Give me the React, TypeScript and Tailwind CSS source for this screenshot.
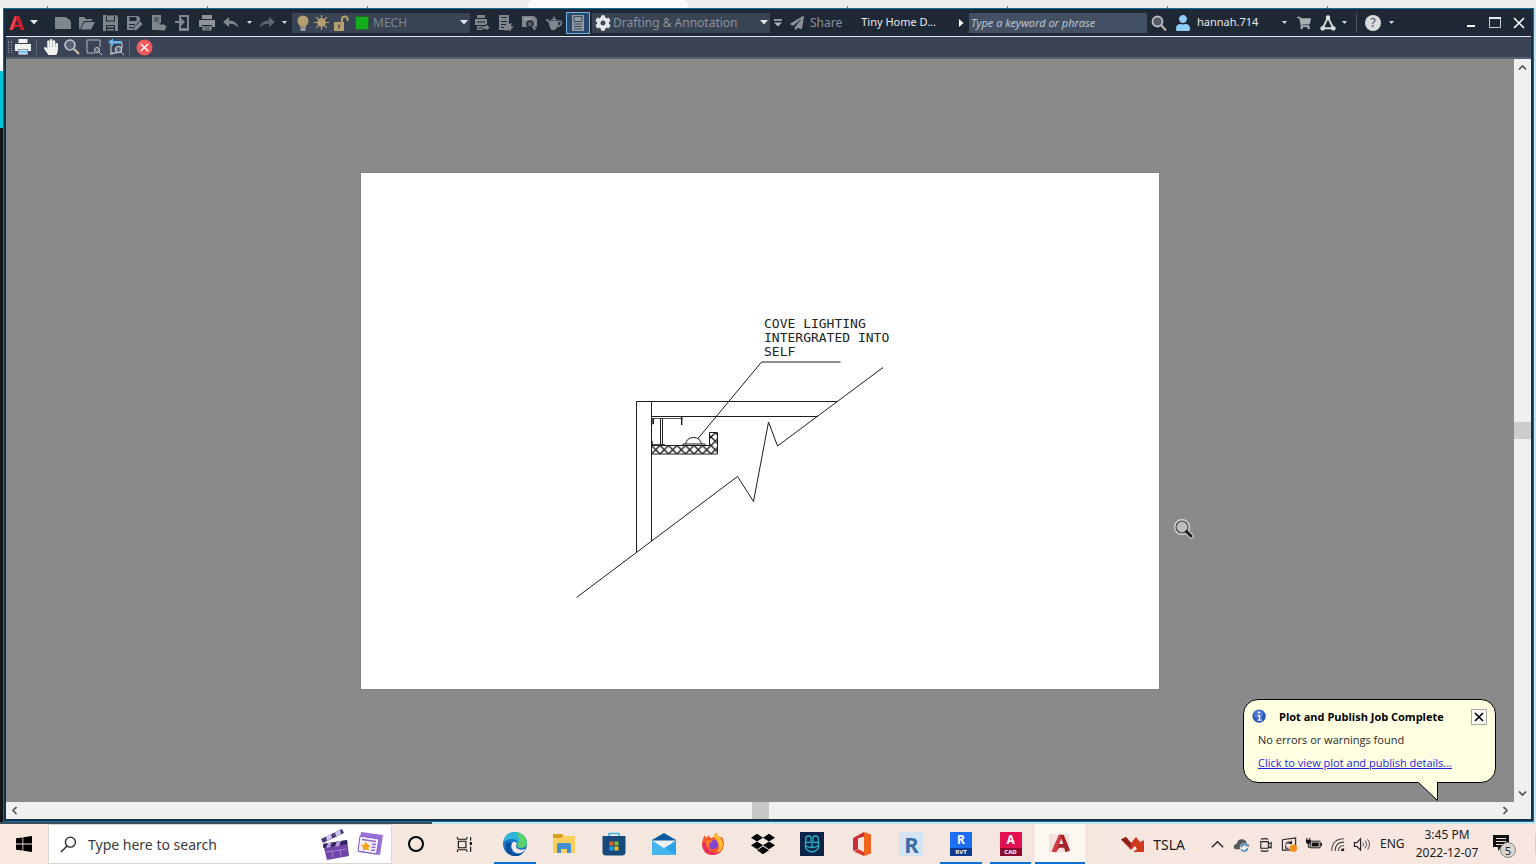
import type { ReactNode } from "react";
import { FaDropbox, FaShoppingCart, FaPaperPlane, FaHandPaper, FaCog, FaUser } from "react-icons/fa";

type IconProps = { children: ReactNode; size?: number; box?: string };

function Icon({ children, size = 18, box = "0 0 18 18" }: IconProps) {
  return (
    <svg width={size} height={size} viewBox={box} fill="none" aria-hidden="true" className="shrink-0">
      {children}
    </svg>
  );
}

function Caret({ className = "text-gray-200" }: { className?: string }) {
  return (
    <svg width="8" height="5" viewBox="0 0 8 5" aria-hidden="true" className={`shrink-0 ${className}`}>
      <path d="M0 0h8L4 4.5z" fill="currentColor" />
    </svg>
  );
}

function CaretButton({ label, className = "w-3" }: { label: string; className?: string }) {
  return (
    <button aria-label={label} className={`flex h-6 shrink-0 items-center justify-center ${className}`}>
      <svg width="5" height="3" viewBox="0 0 5 3" aria-hidden="true">
        <path d="M0 0h5L2.500 3z" fill="#d5d9df" />
      </svg>
    </button>
  );
}

function ToolButton({ label, children, className = "w-6" }: { label: string; children: ReactNode; className?: string }) {
  return (
    <button aria-label={label} title={label} className={`flex h-6 shrink-0 items-center justify-center ${className}`}>
      {children}
    </button>
  );
}

const G = "#7f868d";
const D = "#1f2835";

const fileTools = [
  { label: "New", art: <path d="M1 3h10l6 5v7H1zM12 3l5 4h-5z" fill={G} /> },
  { label: "Open", art: <path d="M1 15V3h5l2 2h6v2H6l-4 8zM6.500 8H17l-4 7.500H2.500z" fill={G} /> },
  {
    label: "Save",
    art: (
      <>
        <path d="M1 1h13l2 2v14H1z" fill={G} />
        <path d="M4 1.500h9v6H4zM4 11h9v6H4z" fill={D} />
        <path d="M5 2h7v4.500H5zM5 12h7v1.500H5zM5 15h7v1.500H5z" fill={G} />
      </>
    ),
  },
  {
    label: "Save As",
    art: (
      <>
        <path d="M1 2h11l2 2v4l-6 8H1z" fill={G} />
        <path d="M3.500 3h7v4h-7zM3 10h6v1H3zM3 13h4v1H3z" fill={D} />
        <path d="M8 13l6-6 3 3-6 6-4 1z" fill={G} stroke={D} strokeWidth="0.800" />
      </>
    ),
  },
  {
    label: "Open from Web & Mobile",
    art: (
      <>
        <path d="M2 1h9v8H8v7H2z" fill={G} />
        <path d="M4 3h5v5H4z" fill="#555d66" />
        <path d="M6 16V9h3l1 1.500h5V12h2l-2.500 4.500z" fill={G} />
      </>
    ),
  },
  {
    label: "Save to Web & Mobile",
    art: (
      <>
        <path d="M5 1h10v16H5zM7 3v11h6V3z" fill={G} fillRule="evenodd" />
        <path d="M1 7h6V4l4 4-4 4V9H1z" fill={G} />
      </>
    ),
  },
  {
    label: "Plot",
    art: (
      <>
        <path d="M4 1h10v4H4zM1 6h16v7h-3v-2H4v2H1z" fill="#8d9399" />
        <path d="M4.500 12h9v4.500h-9z" fill="#8d9399" />
        <path d="M6 13h6M6 15h6" stroke={D} strokeWidth="0.700" />
      </>
    ),
  },
];

const plotTools = [
  {
    label: "Batch Plot",
    art: (
      <>
        <path d="M4 1h8v3H4zM2 5h12v6H2zM4 12h6v4H4z" fill={G} />
        <path d="M4 8h8M5 14h4" stroke={D} />
        <path d="M9 12h4v-2l4 3.500-4 3.500v-2H9z" fill={G} stroke={D} strokeWidth="0.500" />
      </>
    ),
  },
  {
    label: "Page Setup",
    art: (
      <>
        <path d="M2 1h10v8l-3 7H2z" fill={G} />
        <path d="M4.500 3.500h5M4 7.500h6M4 10.500h5M4 13.500h3" stroke={D} />
        <path d="M9 9l3 1 3-1-1 3 3 1-3 2v2l-3-1-3 1 1-3-2-1 2-1z" fill={G} />
      </>
    ),
  },
  {
    label: "Plot Preview",
    art: (
      <>
        <path d="M1 2h12l3 3v8H1z" fill={G} />
        <path d="M3 4h7v2H3z" fill="#9aa0a6" />
        <circle cx="9" cy="10" r="3" fill="#555e68" stroke={D} strokeWidth="1.500" />
        <path d="M11.500 12.500l3 3" stroke={G} strokeWidth="2" />
      </>
    ),
  },
  {
    label: "Render",
    art: (
      <>
        <path d="M3.500 8Q1 7 .5 5.500L3 5q1 2 2 2h8q.5 2 0 5l-3 4H6.500Q4 13 3.500 8zM5 6.500q4-4 8 0z" fill={G} />
        <path d="M8.300 2.500h1.500V5H8.300z" fill={G} />
        <path d="M13 7.500q4-1 3.500 1.500t-4 4" stroke={G} strokeWidth="1.400" />
      </>
    ),
  },
];

function LayerControl() {
  return (
    <div className="ml-0.5 flex h-5 w-[178px] shrink-0 items-center bg-[#384354] pl-px">
      <span className="flex w-[19px] justify-center">
        <Icon>
          <circle cx="9" cy="7" r="5.500" fill="#b59f70" />
          <path d="M6 12h6v2H6z" fill="#9c927b" />
          <path d="M6.500 14.500h5v2h-5z" fill="#b9bec4" />
        </Icon>
      </span>
      <span className="flex w-[19px] justify-center">
        <Icon size={17}>
          <circle cx="9" cy="9" r="4.500" fill="#b59f70" />
          <path d="M9 1v16M1 9h16M3.500 3.500l11 11M14.500 3.500l-11 11" stroke="#b59f70" strokeWidth="1.300" />
        </Icon>
      </span>
      <span className="flex w-[19px] justify-center">
        <Icon>
          <path d="M2 8h10v9H2z" fill="#b59f70" />
          <path d="M10 8V5q0-2.500 2.800-2.500T15.500 5v2" stroke="#b59f70" strokeWidth="2" />
          <path d="M7 10.500v4" stroke="#4c4c48" strokeWidth="1.500" />
        </Icon>
      </span>
      <span className="ml-[5px] size-3.5 shrink-0 border border-[#27622f] bg-[#12ac1c]" />
      <div className="relative flex h-full min-w-0 flex-1 items-center">
        <select aria-label="Layer" className="h-full w-full appearance-none bg-transparent pl-1 text-[12px] text-[#7e868f]">
          <option>MECH</option>
        </select>
        <span className="pointer-events-none absolute right-0.5">
          <Caret />
        </span>
      </div>
    </div>
  );
}

function TitleBar() {
  return (
    <header className="flex h-7 shrink-0 items-center border-b border-[#dfe3e8] bg-[#1f2835] text-[11px]">
      <ToolButton label="Application menu" className="w-[22px]">
        <Icon size={16}>
          <path d="M0.500 17L6.500 1h5l6 16h-4.500l-1-3.500H7l-3 3.500z" fill="#c9202d" />
          <path d="M7.300 11L9 5l2 6z" fill={D} />
          <path d="M.5 17l6-16 2 1.500L4 17z" fill="#ee4550" />
        </Icon>
      </ToolButton>
      <button aria-label="Menu" className="flex h-6 w-3 shrink-0 items-center justify-center">
        <Caret />
      </button>
      <div className="ml-[11px] flex shrink-0">
        {fileTools.map((t) => (
          <ToolButton key={t.label} label={t.label}>
            <Icon>{t.art}</Icon>
          </ToolButton>
        ))}
      </div>
      <ToolButton label="Undo">
        <Icon>
          <path d="M1 8l6-5v3.500q8 0 9.500 7.500Q13 9.500 7 9.800V13z" fill={G} />
        </Icon>
      </ToolButton>
      <CaretButton label="Undo list" />
      <ToolButton label="Redo">
        <Icon>
          <path d="M17 8l-6-5v3.500Q3 6.500 1.500 14 5 9.500 11 9.800V13z" fill="#5e6670" />
        </Icon>
      </ToolButton>
      <CaretButton label="Redo list" className="w-[11px]" />
      <LayerControl />
      {plotTools.map((t) => (
        <ToolButton key={t.label} label={t.label}>
          <Icon>{t.art}</Icon>
        </ToolButton>
      ))}
      <button aria-label="Sheet Set Manager" className="flex h-[22px] w-6 shrink-0 items-center justify-center border border-[#76b4e6] bg-[#29486b]">
        <Icon>
          <path d="M3 1h12v16H3z" fill="#929aa2" />
          <path d="M5 2.500h8v5H5zM5 10h8M5 12.500h8M5 15h8" stroke="#3a4c62" />
        </Icon>
      </button>
      <div className="relative ml-0.5 flex h-5 w-[178px] shrink-0 items-center bg-[#384354] pl-[3px] text-[#8b929b]">
        <FaCog className="size-4 shrink-0 text-[#e3e6ea]" />
        <select aria-label="Workspace" className="h-full w-full appearance-none bg-transparent pl-0.5 text-[12px]">
          <option>Drafting &amp; Annotation</option>
        </select>
        <span className="pointer-events-none absolute right-0.5">
          <Caret />
        </span>
      </div>
      <ToolButton label="Customize Quick Access Toolbar" className="w-4">
        <Icon size={10} box="0 0 10 10">
          <path d="M1 2h8" stroke="#b5bac1" strokeWidth="1.500" />
          <path d="M1 4.500h8l-4 4z" fill="#b5bac1" />
        </Icon>
      </ToolButton>
      <button className="ml-1 flex h-6 shrink-0 items-center gap-1.5 text-[12px] text-[#8b929b]">
        <FaPaperPlane className="size-3.5" />
        Share
      </button>
      <div className="min-w-0 flex-1 truncate text-center text-[#e6e9ed]">Tiny Home D...</div>
      <ToolButton label="Expand search" className="w-3">
        <Icon size={8} box="0 0 8 8">
          <path d="M2 0l4.500 4L2 8z" fill="#fff" />
        </Icon>
      </ToolButton>
      <input
        aria-label="Search help"
        placeholder="Type a keyword or phrase"
        className="ml-0.5 h-5 w-[178px] shrink-0 bg-[#435064] px-0.5 text-[11px] text-white italic placeholder:text-[#bcc3cc]"
      />
      <ToolButton label="Search">
        <Icon>
          <circle cx="7.500" cy="7.500" r="5" fill="#555c66" stroke="#b9bdc2" strokeWidth="1.800" />
          <path d="M11.500 11.500l4.500 5" stroke="#c5b9a9" strokeWidth="2" />
        </Icon>
      </ToolButton>
      <button className="flex h-6 w-[107px] shrink-0 items-center gap-1.5 pl-1 text-[#e6e9ed]">
        <FaUser className="size-4 text-[#8fcbf7]" />
        hannah.714
      </button>
      <CaretButton label="Account menu" />
      <ToolButton label="Autodesk App Store" className="ml-0.5 w-6">
        <FaShoppingCart className="size-3.5 text-[#a9aeb4]" />
      </ToolButton>
      <ToolButton label="Autodesk Account">
        <Icon size={16}>
          <path d="M9 3L3 15h12z" stroke="#d8dbdf" strokeWidth="2.200" />
          <circle cx="9" cy="3" r="2.600" fill="#d8dbdf" />
          <circle cx="3" cy="15" r="2.600" fill="#d8dbdf" />
          <circle cx="15" cy="15" r="2.600" fill="#d8dbdf" />
        </Icon>
      </ToolButton>
      <CaretButton label="Account options" className="w-2" />
      <span className="ml-2 h-5 w-px shrink-0 bg-[#49525f]" />
      <button aria-label="Help" className="ml-2 flex size-4 shrink-0 items-center justify-center rounded-full bg-[#d9dcdf] text-[12px] leading-4 text-[#3b4450]">
        ?
      </button>
      <CaretButton label="Help menu" className="ml-1 w-3" />
      <div className="ml-[62px] flex shrink-0">
        <ToolButton label="Minimize">
          <Icon size={14} box="0 0 14 14">
            <path d="M3 10h8" stroke="#fff" strokeWidth="2" />
          </Icon>
        </ToolButton>
        <ToolButton label="Maximize">
          <Icon size={14} box="0 0 14 14">
            <path d="M1.500 2.500h11v9h-11z" stroke="#c6cad0" />
            <path d="M1 2h12" stroke="#e9ebee" strokeWidth="2" />
          </Icon>
        </ToolButton>
        <ToolButton label="Close">
          <Icon size={12} box="0 0 12 12">
            <path d="M1 1l10 10M11 1L1 11" stroke="#fff" strokeWidth="1.600" />
          </Icon>
        </ToolButton>
      </div>
    </header>
  );
}

function PreviewToolbar() {
  return (
    <div className="flex h-[22px] shrink-0 items-center border-b-2 border-[#566070] bg-[#3a4456]">
      <span className="ml-0.5 h-3 w-1 border-x border-dotted border-[#8b94a3]" />
      <ToolButton label="Plot" className="w-[22px]">
        <Icon>
          <path d="M4.500 1h9v4h-9zM1 6h16v7h-3v-2H4v2H1z" fill="#eef0f2" />
          <path d="M4.500 11.500h9v5h-9z" fill="#fff" />
          <path d="M5 12.500h8v3H5z" fill="#7cc3ee" />
        </Icon>
      </ToolButton>
      <span className="ml-0.5 h-4 w-px bg-[#5c6677]" />
      <ToolButton label="Pan" className="ml-0.5 w-6">
        <FaHandPaper className="size-4 text-[#f1f1ee]" />
      </ToolButton>
      <ToolButton label="Zoom" className="w-[18px]">
        <Icon>
          <circle cx="7" cy="7" r="5" fill="#586274" stroke="#c3c7cc" strokeWidth="1.600" />
          <path d="M11 11l5 5" stroke="#d4bfa2" strokeWidth="2.200" />
        </Icon>
      </ToolButton>
      <ToolButton label="Zoom Window" className="w-[26px]">
        <Icon>
          <path d="M10 15H2V2h13v7" stroke="#b1b7bf" />
          <circle cx="12" cy="12" r="2.500" fill="#586274" stroke="#ccd0d4" />
          <path d="M14 14l3 3" stroke="#ccd0d4" />
        </Icon>
      </ToolButton>
      <ToolButton label="Zoom Original" className="w-[18px]">
        <Icon>
          <path d="M4 6v9h6M15 5v5" stroke="#b1b7bf" strokeWidth="1.300" />
          <path d="M1 4l5-3.500V3h9v2.500H6V8z" fill="#6fb8ee" />
          <circle cx="11.500" cy="11.500" r="3" fill="#586274" stroke="#ccd0d4" strokeWidth="1.200" />
          <path d="M14 14l3 3M3 16h3" stroke="#ccd0d4" />
        </Icon>
      </ToolButton>
      <span className="ml-1 h-4 w-px bg-[#5c6677]" />
      <ToolButton label="Close Preview Window" className="ml-1 w-5">
        <Icon size={17}>
          <circle cx="9" cy="9" r="8.500" fill="#f2595c" />
          <path d="M5 5l8 8M13 5l-8 8" stroke="#fff" strokeWidth="1.500" />
        </Icon>
      </ToolButton>
    </div>
  );
}

function Drawing() {
  return (
    <div className="relative h-[516px] w-[798px] shrink-0 bg-white outline outline-[#808080]">
      <svg viewBox="361 173 798 516" className="size-full" fill="none" stroke="#1d1d1d" aria-hidden="true">
        <defs>
          <pattern id="hatch" x="651.500" y="445.500" width="8.500" height="8.500" patternUnits="userSpaceOnUse">
            <path d="M0 0l8.500 8.500M8.500 0L0 8.500" stroke="#1d1d1d" strokeWidth="1.400" />
          </pattern>
        </defs>
        {/* break line */}
        <path d="M576.500 597.500L737.500 476.500L753.500 501.500L768.500 422L777.500 446L883 367.500" />
        {/* wall and ceiling */}
        <path d="M636.500 552V401.500H838M651.500 541V401.500M651.500 416.500H818" />
        {/* leader */}
        <path d="M840.500 362H761.500L698 438.500" />
        {/* channel */}
        <path d="M651.500 418.500H682.500M682 417v8M652.500 418v6.500" stroke="#555" />
        <path d="M681.500 417v8M653.500 418v6" />
        <path d="M660.500 418.500v27M662.500 418.500v27" />
        <path d="M652 441v4M652 445H665" strokeWidth="1.500" />
        {/* cove shelf */}
        <path d="M651.500 445.500H709.500V432.500H717.500V454H651.500z" fill="url(#hatch)" />
        {/* lamp */}
        <path d="M683 445.500v-1.500H705v1.500M685.500 444Q687 437.500 693.500 437.500T701.500 444" />
      </svg>
      <p className="absolute top-36 left-[403px] font-['DejaVu_Sans_Mono',monospace] text-[13px] leading-[14px] whitespace-pre text-[#222]">
        {"COVE LIGHTING\nINTERGRATED INTO\nSELF"}
      </p>
    </div>
  );
}

function Balloon() {
  return (
    <div role="status" className="absolute right-[18px] bottom-[19px] h-[84px] w-[253px] rounded-[15px] border border-black bg-[#ffffe1] px-2 pt-2 font-['Open_Sans',sans-serif] text-[12px] text-[#2a2a2a]">
      <div className="flex items-center">
        <Icon size={16}>
          <circle cx="8" cy="8" r="7.500" fill="#2a56b8" />
          <circle cx="7.500" cy="6" r="5" fill="#4f7bd8" />
          <path d="M6.500 7.500h2v5M6 12.500h5" stroke="#fff" strokeWidth="1.600" />
          <circle cx="8" cy="4" r="1.300" fill="#fff" />
        </Icon>
        <strong className="ml-[11px] flex-1 text-[11px] leading-[18px] text-black">Plot and Publish Job Complete</strong>
        <button aria-label="Close" className="flex size-4 items-center justify-center border border-[#a9a9a0] bg-[#fbfbf3]">
          <Icon size={10} box="0 0 10 10">
            <path d="M1 1l8 8M9 1L1 9" stroke="#000" strokeWidth="1.700" />
          </Icon>
        </button>
      </div>
      <p className="mt-[5px] pl-1.5 text-[11px] leading-[18px]">No errors or warnings found</p>
      <a href="#details" className="mt-[5px] block pl-1.5 text-[11px] leading-[18px] text-[#2222dd] underline">
        Click to view plot and publish details...
      </a>
      <svg width="22" height="20" viewBox="0 0 22 20" aria-hidden="true" className="absolute right-[56px] -bottom-[20px]">
        <path d="M1 0L20.500 18.500V0z" fill="#ffffe1" />
        <path d="M1.500 .5L20.500 18.500V0" fill="none" stroke="#000" />
      </svg>
    </div>
  );
}

function ScrollArrow({ label, d }: { label: string; d: string }) {
  return (
    <button aria-label={label} className="flex size-[17px] shrink-0 items-center justify-center">
      <Icon size={9} box="0 0 9 9">
        <path d={d} stroke="#505050" strokeWidth="1.600" />
      </Icon>
    </button>
  );
}

function PreviewArea() {
  return (
    <main className="flex min-h-0 flex-1 flex-col">
      <div className="flex min-h-0 flex-1">
        <div className="relative flex min-w-0 flex-1 items-center justify-center overflow-hidden bg-[#8a8a8a]">
          <Drawing />
          <span className="absolute top-[460px] left-[1168px]">
            <Icon size={20} box="0 0 20 20">
              <path d="M11 11l6 6" stroke="#d8d8d8" strokeWidth="5" strokeLinecap="round" />
              <circle cx="8" cy="8" r="6.500" fill="#bdbdbd" stroke="#d8d8d8" strokeWidth="3" />
              <circle cx="8" cy="8" r="6" fill="#bcbcbc" stroke="#444" strokeWidth="1.200" />
              <path d="M12.500 12.500l4.500 4.500" stroke="#1b1b1b" strokeWidth="3" strokeLinecap="round" />
            </Icon>
          </span>
          <Balloon />
        </div>
        <div className="flex w-[17px] flex-col items-center justify-between bg-[#f0f0f0]">
          <ScrollArrow label="Scroll up" d="M1 6.500L4.500 3 8 6.500" />
          <span className="size-[17px] bg-[#cdcdcd]" />
          <ScrollArrow label="Scroll down" d="M1 2.500L4.500 6 8 2.500" />
        </div>
      </div>
      <div className="flex h-[17px] shrink-0 items-center justify-between bg-[#f0f0f0] pr-[17px]">
        <ScrollArrow label="Scroll left" d="M6.500 1L3 4.500 6.500 8" />
        <span className="size-[17px] bg-[#c8c8c8]" />
        <ScrollArrow label="Scroll right" d="M2.500 1L6 4.500 2.500 8" />
      </div>
    </main>
  );
}

function BadgeApp({ letter, tag, main, dark }: { letter: string; tag: string; main: string; dark: string }) {
  return (
    <span className={`flex h-6 w-[22px] flex-col items-center ${main} text-white`}>
      <span className="text-[12px] leading-4 font-bold">{letter}</span>
      <span className={`w-full text-center text-[6px] leading-2 font-bold ${dark}`}>{tag}</span>
    </span>
  );
}

const apps = [
  {
    name: "Microsoft Edge",
    running: true,
    art: (
      <Icon size={24} box="0 0 24 24">
        <circle cx="12" cy="12" r="12" fill="#1976c8" />
        <path d="M0 11Q2 0 12 0q11 1 12 10-.5 6-7 6-4-1-2-4-.5-5-6-5Q3 7 0 11z" fill="#2fb6d8" />
        <path d="M13 0q10 1.500 11 10-.5 6-7 6-4-1-2-4 3-6-2-12z" fill="#5cd06a" />
        <path d="M9 11q-2 6 3 9.500 6 2.500 11-3.500-5 1.500-8 0-3.500-2-1-5.500-2-3-5-.5z" fill="#f6eae2" />
        <path d="M8 11q-2 6 3 10 5 3 10-1-5 6-12 3.500Q1 20 3 12q2-3 5-1z" fill="#0d4f9c" />
      </Icon>
    ),
  },
  {
    name: "File Explorer",
    art: (
      <Icon size={24} box="0 0 24 24">
        <path d="M1 2h9l2 2h10v5H1z" fill="#d99e1b" />
        <path d="M1 6h8l2-2h12v17H1z" fill="#fbcf5c" />
        <path d="M5 21v-8q0-2 2-2h10q2 0 2 2v8h-4v-4H9v4z" fill="#3f8fd2" />
      </Icon>
    ),
  },
  {
    name: "Microsoft Store",
    art: (
      <Icon size={24} box="0 0 24 24">
        <path d="M7 5V1.500h10V5" stroke="#35b5ea" strokeWidth="1.600" />
        <path d="M.5 4h23v16q0 3.500-3.500 3.500H4Q.5 23.500.5 20z" fill="#174a7c" />
        <path d="M7.500 9.500h4v4h-4z" fill="#f1592a" />
        <path d="M12.500 9.500h4v4h-4z" fill="#80bb2b" />
        <path d="M7.500 14.500h4v4h-4z" fill="#20a4ea" />
        <path d="M12.500 14.500h4v4h-4z" fill="#fbba1b" />
      </Icon>
    ),
  },
  {
    name: "Mail",
    art: (
      <Icon size={24} box="0 0 24 24">
        <path d="M0 8l12-7 12 7v3H0z" fill="#0b5a9e" />
        <path d="M0 8.500L12 16l12-7.500V23H0z" fill="#2aa4e6" />
        <path d="M0 8.500L24 23H0z" fill="#45b5f0" />
        <path d="M0 8.500h24L12 16z" fill="#eef2f5" />
      </Icon>
    ),
  },
  {
    name: "Firefox",
    art: (
      <Icon size={24} box="0 0 24 24">
        <path d="M1 13Q1 7 4 3l1 3 3-3 1 3 4-1q0-3 2-4.500 1 3 4 5l2-.5q2 3 2 7-1 10.500-11 11Q2 23 1 13z" fill="#fb5a2c" />
        <path d="M13 5q0-3 2-4.500 1 3 5 6 3 5 1 10-3 5-9 5 7-2 6-8-1-5-5-8.500z" fill="#ffc22e" />
        <path d="M1 12q1 10 10 11 6 0 9-4-6 3-11 0-5-4-3-10z" fill="#ea2d62" />
        <circle cx="12" cy="12.500" r="4.800" fill="#7a44d6" />
        <path d="M5 9q3-2 7 0-1 1.500-3 2-2 3 1 4.500-4 0-5-3z" fill="#fd7d2c" />
      </Icon>
    ),
  },
  { name: "Dropbox", art: <FaDropbox className="size-6 text-black" /> },
  {
    name: "Predator",
    art: (
      <Icon size={24} box="0 0 24 24">
        <path d="M0 0h24v24H0z" fill="#0b2447" />
        <path d="M6 5q3-2 5 0v5q-3 1-5.500 0zM18 5q-3-2-5 0v5q3 1 5.500 0zM5.500 9v6q1 4 6.500 5 5.500-1 6.500-5V9M12 10v6M6 14q6 3 12 0" stroke="#27b4c4" strokeWidth="1.300" />
      </Icon>
    ),
  },
  {
    name: "Office",
    art: (
      <Icon size={24} box="0 0 24 24">
        <path d="M3 6l11-6v4.500L8 6.500V17l-5 2z" fill="#c5303a" />
        <path d="M14 0l7 2.500v19L14 24z" fill="#f0641d" />
        <path d="M4 19.500L8 17l6 3v4z" fill="#d93a2c" />
      </Icon>
    ),
  },
  {
    name: "Revit Viewer",
    art: (
      <span className="flex size-6 items-center justify-center bg-[#d5e4f3] text-[22px] leading-6 font-bold text-[#3b6ea6]">R</span>
    ),
  },
  { name: "Revit", running: true, art: <BadgeApp letter="R" tag="RVT" main="bg-[#1c6ef2]" dark="bg-[#0d3a8c]" /> },
  { name: "AutoCAD", running: true, art: <BadgeApp letter="A" tag="CAD" main="bg-[#e51050]" dark="bg-[#8c0d33]" /> },
  {
    name: "AutoCAD 2022",
    running: true,
    active: true,
    art: (
      <Icon size={22} box="0 0 24 24">
        <path d="M0 1h22v20H0z" fill="#f4e0dc" />
        <path d="M3 20L11 2h5l7 17-5 2-1.500-5H11l-3.500 5z" fill="#a3252c" />
        <path d="M11 12L13.500 6l2 6z" fill="#f4e0dc" />
        <path d="M3 20L11 2l2.500 2L7.500 21z" fill="#cf3d44" />
      </Icon>
    ),
  },
];

const tray = [
  { name: "Show hidden icons", art: <path d="M3 12l6-6 6 6" stroke="#222" strokeWidth="1.400" /> },
  {
    name: "OneDrive",
    art: (
      <>
        <path d="M1 13q-1-4 3-5 1-5 6-4.500 4 .5 4.500 4.500 3 .5 2.500 4l-2 2H3z" fill="#555a60" />
        <circle cx="12" cy="12.500" r="4.800" fill="#f5e9e2" />
        <path d="M8.500 12q1-3 4-3 2 0 3 2M15.500 13q-1 3-4 3-2 0-3-2" stroke="#2f7fc9" strokeWidth="1.500" />
      </>
    ),
  },
  {
    name: "Meet Now",
    art: (
      <>
        <path d="M4 6h8v7H4zM12 8.500l3-1.500v5.500L12 11z" stroke="#222" strokeWidth="1.200" />
        <path d="M4 3.500Q8 2 12 3.500M4 15.500q4 1.500 8 0" stroke="#222" strokeWidth="1.200" />
      </>
    ),
  },
  {
    name: "Windows Update",
    art: (
      <>
        <path d="M1.500 4l14-2v11M1.500 4v11h8" stroke="#222" strokeWidth="1.200" />
        <path d="M5 9q1-3 4-2.500l2 1M11 5v3H8M5 10v3h3" stroke="#222" strokeWidth="1.200" />
        <circle cx="13" cy="13" r="4" fill="#f7911e" />
      </>
    ),
  },
  {
    name: "Battery",
    art: (
      <>
        <path d="M5.500 5.500h10.500v7H5.500z" stroke="#111" />
        <path d="M7 7h7.500v4H7zM16.500 7.500H18v3h-1.500zM1 4h5v2.500l-1.500 2h-2L1 6.500z" fill="#111" />
        <path d="M2 2v2.500M5 2v2.500M3.500 8v4H5" stroke="#111" />
      </>
    ),
  },
  {
    name: "Network",
    art: (
      <>
        <path d="M3 16Q3 3 16 3M6.500 16Q6.500 6.500 16 6.500M10 16q0-6 6-6" stroke="#444" strokeWidth="1.100" />
        <path d="M12.500 16q0-3 3.500-3v3z" fill="#222" />
      </>
    ),
  },
  {
    name: "Volume",
    art: (
      <>
        <path d="M1.500 7h2.500l4-4v12l-4-4H1.500z" stroke="#222" strokeWidth="1.200" />
        <path d="M10.500 7q1.500 2 0 4M13 5q3 4 0 8M15.500 3.500q4 5.500 0 11" stroke="#444" />
      </>
    ),
  },
];

function Taskbar() {
  return (
    <footer className="flex h-10 shrink-0 items-stretch bg-linear-to-r from-[#fae8df] via-[#f3e7df] to-[#f9e6e0] text-[#1c1c1c]">
      <button aria-label="Start" className="flex w-12 shrink-0 items-center justify-center">
        <Icon size={16} box="0 0 16 16">
          <path d="M0 2.300L6.500 1.400v6.200H0zM7.300 1.300L16 0v7.600H7.300zM0 8.400h6.500v6.200L0 13.700zM7.300 8.400H16V16l-8.700-1.300z" fill="#000" />
        </Icon>
      </button>
      <div className="flex w-[344px] shrink-0 items-center border border-[#dcd6d3] bg-white pr-1.5">
        <span className="ml-[11px] flex w-[18px] shrink-0">
          <Icon size={17}>
            <circle cx="11" cy="6.500" r="5.300" stroke="#222" strokeWidth="1.400" />
            <path d="M7.500 10.500L1 17" stroke="#222" strokeWidth="1.400" />
          </Icon>
        </span>
        <input
          aria-label="Search"
          placeholder="Type here to search"
          className="min-w-0 flex-1 bg-transparent pl-2.5 text-[14px] outline-none placeholder:text-[#3a3a3a]"
        />
        <Icon size={32} box="0 0 32 32">
          <path d="M2 11L23 1l2 4L4 15z" fill="#4a3a78" />
          <path d="M7 8.500l5-2.500 1 4.500-5 2.500zM16 4.500L21 2l1 4.500-5 2z" fill="#cfc3f0" />
          <path d="M4 16l24-4 2 16-22 4z" fill="#6f46a8" />
          <path d="M4 16l24-4 .5 4-24 4z" fill="#33265c" />
          <path d="M9 15l4-.7-2 5-4 .7zM18 13.600l4-.6-2 5-4 .6z" fill="#b9a2e4" />
          <path d="M7 24l21-3M13 23l1 6M21 22l1 6" stroke="#a581da" />
        </Icon>
        <span className="ml-1.5 flex">
          <Icon size={28} box="0 0 28 28">
            <path d="M4 2l22 3-3 20-22-3z" fill="#9a6fd8" />
            <path d="M3 6l19 3-2.500 15L1 21z" fill="#f4effc" stroke="#8359c4" />
            <path d="M5 9.500l14 2M15 14l4 .5M14.500 17l4 .5M14 20l4 .5" stroke="#8d6cc4" strokeWidth="1.400" />
            <path d="M9 11.500l1.500 3 3 .5-2 2.500.5 3-3-1-3 1v-3L4 15l3-.5z" fill="#f7a21e" />
          </Icon>
        </span>
      </div>
      <button aria-label="Cortana" className="flex w-12 shrink-0 items-center justify-center">
        <span className="size-4 rounded-full border-2 border-black" />
      </button>
      <button aria-label="Task View" className="mr-0.5 flex w-12 shrink-0 items-center justify-center">
        <Icon size={17}>
          <path d="M2.500 5.500h8v7h-8zM1.500 1v2M1.500 3.500h10M11.500 1v2M1.500 17v-2M1.500 14.500h10M11.500 17v-2M15.500 1v4M15.500 11v6" stroke="#111" strokeWidth="1.200" />
          <path d="M14.500 6.500h2.500v3h-2.500z" fill="#111" />
        </Icon>
      </button>
      <nav aria-label="Apps" className="flex w-[595px] shrink-0">
        {apps.map((app) => (
          <button
            key={app.name}
            aria-label={app.name}
            className={`relative flex flex-1 items-center justify-center ${app.active ? "bg-[#fdf7f2]" : ""}`}
          >
            {app.art}
            {app.running && (
              <span className={`absolute bottom-0 h-0.5 bg-[#0b72d4] ${app.active ? "inset-x-0" : "inset-x-1"}`} />
            )}
          </button>
        ))}
      </nav>
      <div className="ml-auto flex shrink-0 items-center">
        <button className="mr-5 flex items-center gap-2 text-[14px]">
          <Icon size={24} box="0 0 24 24">
            <path d="M0 7.500L5 5l5 6 5-6 4 5 4-2v12H12l4-3-2-3-4 4z" fill="#cf3a1e" />
            <path d="M0 7.500L5 5l5 6v5z" fill="#8d1f1a" />
          </Icon>
          TSLA
        </button>
        {tray.map((t) => (
          <button key={t.name} aria-label={t.name} className="flex w-6 justify-center">
            <Icon size={17}>{t.art}</Icon>
          </button>
        ))}
        <span className="ml-[7px] w-[30px] text-[12px]">ENG</span>
        <div className="ml-1 w-[66px] text-center text-[12px] leading-[18px]">
          <div>3:45 PM</div>
          <div>2022-12-07</div>
        </div>
        <button aria-label="Notifications" className="relative ml-3 flex w-11 items-center border-r border-[#ddd0ca]">
          <Icon size={20} box="0 0 20 20">
            <path d="M1 1h16v12H9l-3 4v-4H1z" fill="#111" />
            <path d="M4 4.500h10M4 7.500h10M4 10.500h7" stroke="#e9ddd7" />
          </Icon>
          <span className="absolute top-2 left-2 flex size-4 items-center justify-center rounded-full border border-[#8a8683] bg-[#dcd4cf] text-[11px] leading-none">
            5
          </span>
        </button>
      </div>
    </footer>
  );
}

export default function App() {
  return (
    <div className="flex h-screen flex-col overflow-hidden bg-[#ececec] font-['Noto_Sans','Open_Sans',sans-serif]">
      {/* browser tabs peeking out behind the window */}
      <div className="flex h-2 shrink-0 items-end bg-[#ececec]">
        <span className="h-0.5 w-12 border-r border-[#777]" />
        <span className="h-0.5 w-40 border-r border-[#777]" />
        <span className="h-0.5 w-40 border-r border-[#777]" />
        <span className="ml-40 h-2 w-40 rounded-t-md bg-[#fbfbfb]" />
        <span className="h-0.5 w-40 border-r border-[#777]" />
        <span className="h-0.5 w-40 border-r border-[#777]" />
        <span className="h-0.5 w-40 border-r border-[#777]" />
        <span className="h-0.5 w-40 border-r border-[#777]" />
      </div>
      <div className="flex min-h-0 flex-1">
        <div className="flex w-[3px] shrink-0 flex-col">
          <span className="h-[63px] bg-white" />
          <span className="h-[57px] bg-[#00c4d6]" />
          <span className="flex-1 bg-[#121417]" />
        </div>
        <div className="flex min-w-0 flex-1 flex-col border border-[#0f6d99] bg-[#12304a] px-0.5 pb-0.5">
          <TitleBar />
          <PreviewToolbar />
          <PreviewArea />
        </div>
        <div className="w-0.5 shrink-0 bg-[#c9e6ef]" />
      </div>
      <div className="flex h-0.5 shrink-0 bg-[#c4e9f0]">
        <span className="w-[432px] bg-[#3a5058]" />
      </div>
      <Taskbar />
    </div>
  );
}
